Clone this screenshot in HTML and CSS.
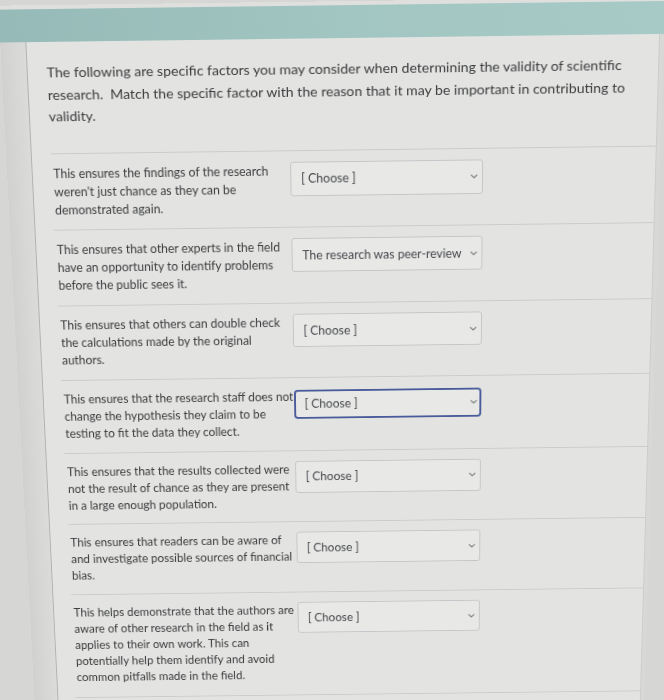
FILE: index.html
```html
<!DOCTYPE html>
<html lang="en">
<head>
<meta charset="utf-8">
<title>Matching question</title>
<link rel="stylesheet" href="styles.css">
</head>
<body>
<div class="page">
  <div class="topstrip"></div>
  <div class="teal"></div>
  <div class="main">
    <div class="gutter"></div>
    <div class="card">
      <p class="intro">The following are specific factors you may consider when determining the validity of scientific research.&nbsp; Match the specific factor with the reason that it may be important in contributing to validity.</p>
      <div class="answers">
        <div class="row">
          <div class="q">This ensures the findings of the research<br>weren't just chance as they can be<br>demonstrated again.</div>
          <div class="sel"><span>[ Choose ]</span><svg viewBox="0 0 8 5"><polyline points="0.8,0.8 4,4 7.2,0.8"/></svg></div>
        </div>
        <div class="row">
          <div class="q">This ensures that other experts in the field<br>have an opportunity to identify problems<br>before the public sees it.</div>
          <div class="sel"><span>The research was peer-review</span><svg viewBox="0 0 8 5"><polyline points="0.8,0.8 4,4 7.2,0.8"/></svg></div>
        </div>
        <div class="row">
          <div class="q">This ensures that others can double check<br>the calculations made by the original<br>authors.</div>
          <div class="sel"><span>[ Choose ]</span><svg viewBox="0 0 8 5"><polyline points="0.8,0.8 4,4 7.2,0.8"/></svg></div>
        </div>
        <div class="row">
          <div class="q">This ensures that the research staff does not<br>change the hypothesis they claim to be<br>testing to fit the data they collect.</div>
          <div class="sel focus"><span>[ Choose ]</span><svg viewBox="0 0 8 5"><polyline points="0.8,0.8 4,4 7.2,0.8"/></svg></div>
        </div>
        <div class="row">
          <div class="q">This ensures that the results collected were<br>not the result of chance as they are present<br>in a large enough population.</div>
          <div class="sel"><span>[ Choose ]</span><svg viewBox="0 0 8 5"><polyline points="0.8,0.8 4,4 7.2,0.8"/></svg></div>
        </div>
        <div class="row">
          <div class="q">This ensures that readers can be aware of<br>and investigate possible sources of financial<br>bias.</div>
          <div class="sel"><span>[ Choose ]</span><svg viewBox="0 0 8 5"><polyline points="0.8,0.8 4,4 7.2,0.8"/></svg></div>
        </div>
        <div class="row last">
          <div class="q">This helps demonstrate that the authors are<br>aware of other research in the field as it<br>applies to their own work. This can<br>potentially help them identify and avoid<br>common pitfalls made in the field.</div>
          <div class="sel"><span>[ Choose ]</span><svg viewBox="0 0 8 5"><polyline points="0.8,0.8 4,4 7.2,0.8"/></svg></div>
        </div>
      </div>
    </div>
  </div>
</div>
</body>
</html>
```
FILE: styles.css
```css
html, body {
  margin: 0;
  height: 700px;
  overflow: hidden;
}
body {
  background: #d6d7d5;
  font-family: Lato, "Open Sans", "Liberation Sans", sans-serif;
  color: #3b3c3d;
}
.page {
  width: 664px;
  transform-origin: 424px 36px;
  transform: perspective(1000px) rotateX(-7deg) skewY(-0.75deg);
}
.topstrip {
  height: 4px;
  background: #dfe0de;
}
.teal {
  height: 33px;
  background: linear-gradient(90deg, #96bab7, #a2c6c2 55%, #a7cac6);
}
.main {
  display: flex;
  background: #d8d9d7;
}
.gutter {
  width: 25px;
  flex: none;
  background: linear-gradient(90deg, #d1d2d0, #dbdcda);
}
.card {
  box-sizing: border-box;
  width: 635px;
  flex: none;
  background: #e3e4e2;
  border-left: 1px solid #b2b3b1;
  border-right: 1px solid #cdcecc;
  padding: 20px 0 60px 19px;
}
.intro {
  margin: 0;
  width: 604px;
  font-size: 14.15px;
  line-height: 22.5px;
}
.answers {
  margin-top: 26px;
  border-bottom: 1px solid #cbccca;
}
.row {
  display: flex;
  align-items: flex-start;
  border-top: 1px solid #cbccca;
  padding: 11px 0 11.8px 2px;
}
.row.last {
  padding-bottom: 14px;
}
.q {
  width: 241px;
  flex: none;
  font-size: 12.4px;
  line-height: 19px;
  white-space: nowrap;
}
.sel {
  box-sizing: border-box;
  width: 196px;
  height: 36px;
  flex: none;
  display: flex;
  align-items: center;
  padding: 0 4px 0 10px;
  border: 1px solid #c3c6c8;
  border-radius: 3px;
  background: #e8e9e7;
  font-size: 12.5px;
  color: #45464a;
}
.sel span {
  flex: 1;
  min-width: 0;
  overflow: hidden;
  white-space: nowrap;
  margin-right: 6px;
}
.sel svg {
  flex: none;
  width: 8px;
  height: 5px;
  fill: none;
  stroke: #77797c;
  stroke-width: 1.2;
}
.sel.focus {
  height: 32px;
  margin-top: 2px;
  padding-left: 9px;
  padding-right: 2px;
  border: 2px solid #4a5b9b;
  border-radius: 4px;
}
```
